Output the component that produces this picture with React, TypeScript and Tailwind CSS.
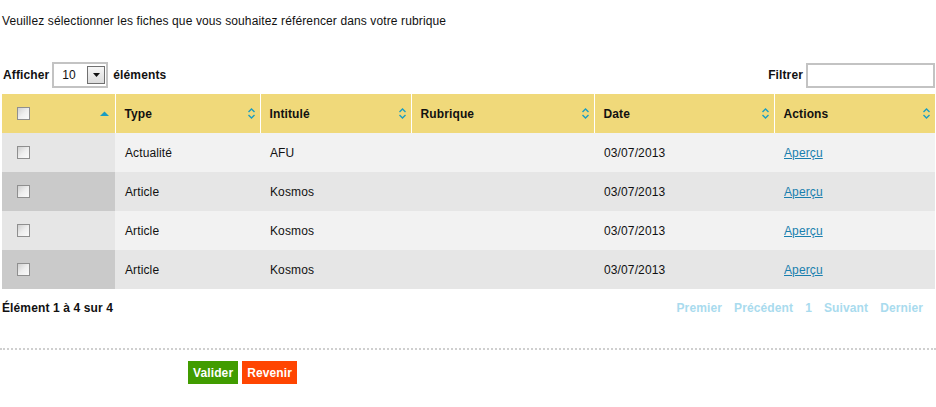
const rows = [
  { type: "Actualité", title: "AFU", date: "03/07/2013" },
  { type: "Article", title: "Kosmos", date: "03/07/2013" },
  { type: "Article", title: "Kosmos", date: "03/07/2013" },
  { type: "Article", title: "Kosmos", date: "03/07/2013" },
];

const columns = [
  { label: "Type", w: "w-[145px]" },
  { label: "Intitulé", w: "w-[151px]" },
  { label: "Rubrique", w: "w-[183px]" },
  { label: "Date", w: "w-[180px]" },
  { label: "Actions", w: "w-[161px]" },
];

function SortBoth() {
  return (
    <svg width="7" height="11" viewBox="0 0 7 11" className="shrink-0">
      <path d="M0.5 4 L3.5 1 L6.5 4" fill="none" stroke="#1b9dc2" strokeWidth="1.4" />
      <path d="M0.5 7 L3.5 10 L6.5 7" fill="none" stroke="#1b9dc2" strokeWidth="1.4" />
    </svg>
  );
}

function SortAsc() {
  return (
    <svg width="9" height="5" viewBox="0 0 9 5" className="shrink-0">
      <path d="M0 5 L4.5 0.5 L9 5 Z" fill="#1b9dc2" />
    </svg>
  );
}

function Checkbox() {
  return (
    <span className="block h-[13px] w-[13px] border border-[#8f8f8f] bg-gradient-to-br from-[#d0d0d0] via-[#eeeeee] to-[#fbfbfb]" />
  );
}

export default function App() {
  return (
    <div className="w-[936px] bg-white pl-[2px] pr-[1px] text-[12px] tracking-[0.12px] text-[#111] [font-family:'Liberation_Sans',Arial,sans-serif]">
      <p className="pt-[14px] leading-[14px]">
        Veuillez sélectionner les fiches que vous souhaitez référencer dans votre rubrique
      </p>

      <div className="mt-[34px] flex items-center justify-between">
        <div className="flex items-center font-bold">
          <span className="pl-px">Afficher</span>
          <div className="ml-[3px] flex h-[26px] w-[56px] items-center border-2 border-[#c3c3c3] pl-[8px] font-normal">
            <span className="flex-1">10</span>
            <span className="mr-[1px] flex h-[18px] w-[18px] items-center justify-center border border-[#707070] bg-gradient-to-b from-[#f6f6f6] to-[#dcdcdc]">
              <svg width="7" height="4" viewBox="0 0 7 4">
                <path d="M0 0 L7 0 L3.5 4 Z" fill="#111" />
              </svg>
            </span>
          </div>
          <span className="ml-[5px]">éléments</span>
        </div>
        <div className="flex items-center font-bold">
          <span>Filtrer</span>
          <div className="ml-[3px] h-[25px] w-[129px] border-2 border-[#c3c3c3] bg-white" />
        </div>
      </div>

      <table className="mt-[6px] w-[933px] table-fixed border-collapse">
        <thead>
          <tr className="h-[39px] bg-[#f0d97a] font-bold">
            <th className="w-[113px] border-r border-white p-0">
              <div className="flex items-center justify-between pl-[15px] pr-[6px]">
                <Checkbox />
                <SortAsc />
              </div>
            </th>
            {columns.map((c, i) => (
              <th
                key={c.label}
                className={`${c.w} p-0 text-left ${i < columns.length - 1 ? "border-r border-white" : ""}`}
              >
                <div className="flex items-center justify-between pl-[9px] pr-[5px]">
                  <span>{c.label}</span>
                  <SortBoth />
                </div>
              </th>
            ))}
          </tr>
        </thead>
        <tbody>
          {rows.map((r, i) => {
            const odd = i % 2 === 0;
            return (
              <tr key={i} className={`h-[39px] ${odd ? "bg-[#f2f2f2]" : "bg-[#e6e6e6]"}`}>
                <td className={`p-0 pl-[15px] ${odd ? "bg-[#e6e6e6]" : "bg-[#cacaca]"}`}>
                  <Checkbox />
                </td>
                <td className="pl-[10px]">{r.type}</td>
                <td className="pl-[10px]">{r.title}</td>
                <td className="pl-[10px]"></td>
                <td className="pl-[10px]">{r.date}</td>
                <td className="pl-[10px]">
                  <a href="#" className="text-[#1a7fae] underline">
                    Aperçu
                  </a>
                </td>
              </tr>
            );
          })}
        </tbody>
      </table>

      <div className="mt-[10px] flex items-center justify-between font-bold">
        <span>Élément 1 à 4 sur 4</span>
        <div className="flex gap-[12px] pr-[12px] text-[#a9dbee]">
          <span>Premier</span>
          <span>Précédent</span>
          <span>1</span>
          <span>Suivant</span>
          <span>Dernier</span>
        </div>
      </div>

      <div className="-ml-[2px] -mr-[1px] mt-[31px] border-t-2 border-dotted border-[#cfcfcf]" />

      <div className="mt-[11px] flex gap-[4px] pl-[186px] pb-[20px] font-bold text-white">
        <button className="h-[23px] bg-[#419c00] px-[5px]">Valider</button>
        <button className="h-[23px] bg-[#ff4501] px-[5px]">Revenir</button>
      </div>
    </div>
  );
}
